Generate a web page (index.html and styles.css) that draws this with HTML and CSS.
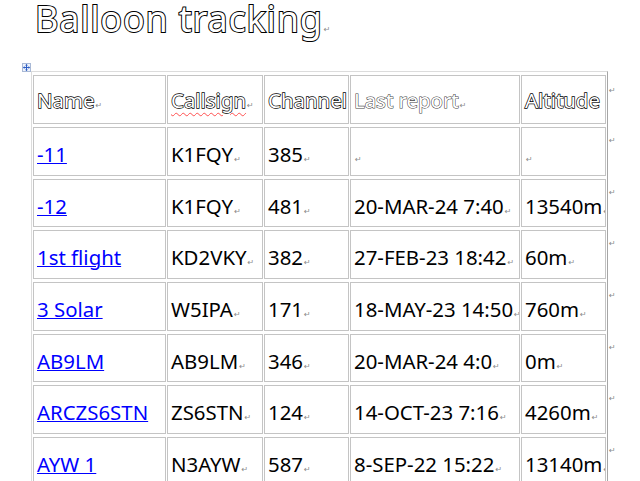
FILE: index.html
```html
<!DOCTYPE html>
<html>
<head>
<meta charset="utf-8">
<title>Balloon tracking</title>
<link rel="stylesheet" href="styles.css">
</head>
<body>
<div class="doc">
  <h1 class="title"><span class="outline-big">Balloon tracking</span><span class="pm">↵</span></h1>
  <div class="handle">
    <svg width="9" height="9" viewBox="0 0 9 9">
      <rect x="0.5" y="0.5" width="8" height="8" fill="#eef3fb" stroke="#a9b9d6"/>
      <path d="M4.5 1.5v6M1.5 4.5h6" stroke="#2f5fc4" stroke-width="1"/>
      <path d="M4.5 1l-1.5 1.5h3zM4.5 8l-1.5-1.5h3zM1 4.5l1.5-1.5v3zM8 4.5l-1.5-1.5v3z" fill="#2f5fc4"/>
    </svg>
  </div>
  <div class="table-wrap">
    <table class="grid">
      <tr class="head">
        <td class="c-name"><span class="outline">Name</span><span class="pm">↵</span></td>
        <td class="c-call"><span class="outline squiggle">Callsign</span><span class="pm">↵</span></td>
        <td class="c-chan"><span class="outline">Channel</span></td>
        <td class="c-last"><span class="outline thin">Last report</span><span class="pm">↵</span></td>
        <td class="c-alt"><span class="outline">Altitude</span></td>
      </tr>
      <tr>
        <td><a href="#">-11</a></td>
        <td>K1FQY<span class="pm">↵</span></td>
        <td>385<span class="pm">↵</span></td>
        <td><span class="pm">↵</span></td>
        <td><span class="pm">↵</span></td>
      </tr>
      <tr>
        <td><a href="#">-12</a></td>
        <td>K1FQY<span class="pm">↵</span></td>
        <td>481<span class="pm">↵</span></td>
        <td>20-MAR-24 7:40<span class="pm">↵</span></td>
        <td>13540m<span class="pm">↵</span></td>
      </tr>
      <tr>
        <td><a href="#">1st flight</a></td>
        <td>KD2VKY<span class="pm">↵</span></td>
        <td>382<span class="pm">↵</span></td>
        <td>27-FEB-23 18:42<span class="pm">↵</span></td>
        <td>60m<span class="pm">↵</span></td>
      </tr>
      <tr>
        <td><a href="#">3 Solar</a></td>
        <td>W5IPA<span class="pm">↵</span></td>
        <td>171<span class="pm">↵</span></td>
        <td>18-MAY-23 14:50<span class="pm">↵</span></td>
        <td>760m<span class="pm">↵</span></td>
      </tr>
      <tr>
        <td><a href="#">AB9LM</a></td>
        <td>AB9LM<span class="pm">↵</span></td>
        <td>346<span class="pm">↵</span></td>
        <td>20-MAR-24 4:0<span class="pm">↵</span></td>
        <td>0m<span class="pm">↵</span></td>
      </tr>
      <tr>
        <td><a href="#">ARCZS6STN</a></td>
        <td>ZS6STN<span class="pm">↵</span></td>
        <td>124<span class="pm">↵</span></td>
        <td>14-OCT-23 7:16<span class="pm">↵</span></td>
        <td>4260m<span class="pm">↵</span></td>
      </tr>
      <tr>
        <td><a href="#">AYW 1</a></td>
        <td>N3AYW<span class="pm">↵</span></td>
        <td>587<span class="pm">↵</span></td>
        <td>8-SEP-22 15:22<span class="pm">↵</span></td>
        <td>13140m<span class="pm">↵</span></td>
      </tr>
    </table>
    <div class="row-marks">
      <div class="rm rm-head">↵</div>
      <div class="rm">↵</div>
      <div class="rm">↵</div>
      <div class="rm">↵</div>
      <div class="rm">↵</div>
      <div class="rm">↵</div>
      <div class="rm">↵</div>
      <div class="rm">↵</div>
    </div>
  </div>
</div>
</body>
</html>
```
FILE: styles.css
```css
html, body {
  margin: 0;
  padding: 0;
  background: #fff;
}
body {
  width: 640px;
  height: 481px;
  overflow: hidden;
  font-family: "Noto Sans", "Open Sans", sans-serif;
  color: #000;
}
.doc {
  padding-left: 22px;
}
.title {
  margin: 1px 0 0 13px;
  font-size: 36px;
  line-height: 36px;
  height: 35px;
  font-weight: 400;
  letter-spacing: 0.8px;
  white-space: nowrap;
}
.outline-big {
  color: #fff;
  -webkit-text-stroke: 2px #000;
  paint-order: stroke fill;
}
.title .pm {
  letter-spacing: 0;
}
.pm {
  font-family: "DejaVu Sans", sans-serif;
  font-size: 8px;
  line-height: 0;
  color: #8a8a8a;
  margin-left: 1px;
  -webkit-text-stroke: 0;
}
.handle {
  margin-top: 27px;
  width: 9px;
  height: 9px;
  line-height: 0;
}
.handle svg {
  display: block;
}
.table-wrap {
  display: flex;
  align-items: flex-start;
  margin-left: 9px;
  margin-top: -1px;
}
.grid {
  width: 577px;
  table-layout: fixed;
  border-collapse: separate;
  border-spacing: 1px 3px;
  border: 1px solid #dcdcdc;
  border-right-color: #a6a6a6;
  border-bottom-color: #a6a6a6;
}
.grid td {
  border: 1px solid #c4c4c4;
  padding: 12px 1px 0 3px;
  vertical-align: top;
  font-size: 20.4px;
  line-height: 28px;
  white-space: nowrap;
  overflow: hidden;
}
.grid tr {
  height: 48.67px;
}
.grid tr.head {
  height: 49px;
}
.grid tr.head td {
  padding-top: 10px;
}
.c-name { width: 127px; }
.c-call { width: 90px; }
.c-chan { width: 79px; }
.c-last { width: 164px; }
.c-alt { width: 79px; }
.outline {
  color: #fff;
  -webkit-text-stroke: 1.4px #000;
  paint-order: stroke fill;
}
.outline.thin {
  -webkit-text-stroke: 1.1px #444;
}
.squiggle {
  text-decoration-line: underline;
  text-decoration-style: wavy;
  text-decoration-color: #ff5050;
  text-decoration-thickness: 1px;
  text-underline-offset: 4px;
}
.grid a {
  color: #0000ff;
  text-decoration: underline;
  text-decoration-thickness: 1px;
}
.row-marks {
  display: flex;
  flex-direction: column;
  padding-top: 4px;
  margin-left: 1px;
}
.rm {
  height: 51.67px;
  padding-top: 9px;
  box-sizing: border-box;
  font-family: "DejaVu Sans", sans-serif;
  font-size: 8px;
  line-height: 10px;
  color: #8a8a8a;
}
.rm-head {
  height: 52px;
  padding-top: 11px;
}
```
